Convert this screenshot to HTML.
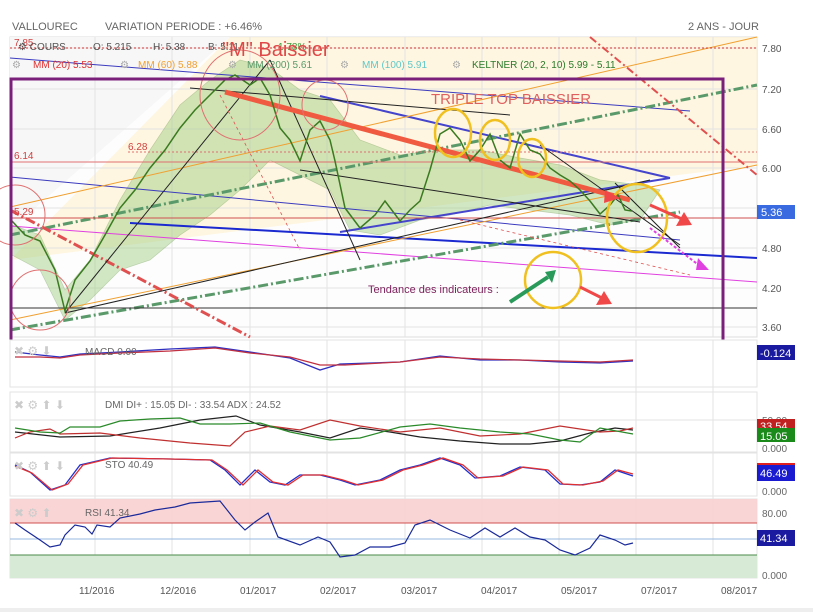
<!DOCTYPE html>
<html><head><meta charset="utf-8"><style>
html,body{margin:0;padding:0;background:#fff;width:813px;height:612px;overflow:hidden}
svg{display:block;font-family:"Liberation Sans",sans-serif}
</style></head><body>
<svg width="813" height="612" viewBox="0 0 813 612">
<rect x="0" y="608" width="813" height="4" fill="#eee"/>
<text x="12" y="30" font-size="11" fill="#666">VALLOUREC</text>
<text x="105" y="30" font-size="11" fill="#666">VARIATION PERIODE : +6.46%</text>
<text x="688" y="30" font-size="11" fill="#666">2 ANS - JOUR</text>

<rect x="10" y="37" width="747" height="300" fill="#fdfdfd" stroke="#ddd"/>
<polygon points="230,37 757,37 757,165 10,260" fill="#fdf3d6" opacity="0.75"/>
<polygon points="10,37 230,37 10,230" fill="#f7f7f7"/>
<g stroke="#e3e3e3" stroke-width="1">
<line x1="95" y1="37" x2="95" y2="337"/><line x1="172" y1="37" x2="172" y2="337"/><line x1="250" y1="37" x2="250" y2="337"/><line x1="327" y1="37" x2="327" y2="337"/><line x1="405" y1="37" x2="405" y2="337"/><line x1="482" y1="37" x2="482" y2="337"/><line x1="559" y1="37" x2="559" y2="337"/><line x1="636" y1="37" x2="636" y2="337"/><line x1="713" y1="37" x2="713" y2="337"/>
<line x1="10" y1="48" x2="757" y2="48"/><line x1="10" y1="89" x2="757" y2="89"/><line x1="10" y1="129" x2="757" y2="129"/><line x1="10" y1="168" x2="757" y2="168"/><line x1="10" y1="208" x2="757" y2="208"/><line x1="10" y1="248" x2="757" y2="248"/><line x1="10" y1="288" x2="757" y2="288"/><line x1="10" y1="327" x2="757" y2="327"/>
</g>
<path d="M12,225 L40,235 L65,290 L90,260 L120,200 L150,150 L180,105 L210,80 L240,60 L270,68 L300,90 L330,100 L360,140 L400,155 L440,150 L480,150 L520,158 L560,165 L600,180 L640,185 L660,190 L640,220 L610,225 L570,215 L530,210 L490,205 L450,215 L420,220 L380,235 L350,230 L330,190 L300,175 L270,160 L240,190 L210,215 L180,235 L150,260 L120,270 L90,300 L65,320 L40,270 L12,255 Z" fill="#9ccc7e" opacity="0.45" stroke="#6a9a4a" stroke-width="0.7"/>
<g fill="none">
<line x1="10" y1="58" x2="690" y2="111" stroke="#3b3bbf" stroke-width="1"/>
<line x1="10" y1="177" x2="680" y2="240" stroke="#3b3bbf" stroke-width="1"/>
<line x1="130" y1="223" x2="757" y2="258" stroke="#1a2ad0" stroke-width="2"/>
<line x1="10" y1="226" x2="757" y2="282" stroke="#e040e0" stroke-width="1"/>
<line x1="320" y1="96" x2="670" y2="178" stroke="#4444cc" stroke-width="2"/>
<line x1="340" y1="232" x2="670" y2="178" stroke="#4444cc" stroke-width="2"/>
<line x1="10" y1="235" x2="757" y2="85" stroke="#5a9a6a" stroke-width="3" stroke-dasharray="10,3,2,3"/>
<line x1="10" y1="330" x2="680" y2="212" stroke="#5a9a6a" stroke-width="3" stroke-dasharray="10,3,2,3"/>
<line x1="10" y1="207" x2="757" y2="37" stroke="#f0a030" stroke-width="1"/>
<line x1="10" y1="320" x2="757" y2="165" stroke="#f0a030" stroke-width="1"/>
<line x1="10" y1="162" x2="757" y2="162" stroke="#e07070" stroke-width="1"/>
<line x1="128" y1="152" x2="757" y2="152" stroke="#e07070" stroke-width="1" stroke-dasharray="2,2"/>
<line x1="10" y1="218" x2="757" y2="218" stroke="#d05050" stroke-width="1"/>
<line x1="10" y1="308" x2="757" y2="308" stroke="#333" stroke-width="1"/>
<line x1="10" y1="48" x2="757" y2="48" stroke="#d03030" stroke-width="1" stroke-dasharray="2,2"/>
<line x1="10" y1="210" x2="250" y2="337" stroke="#e05050" stroke-width="3" stroke-dasharray="10,3,2,3"/>
<line x1="590" y1="37" x2="757" y2="175" stroke="#e05050" stroke-width="2" stroke-dasharray="8,3,2,3"/>
<line x1="65" y1="313" x2="270" y2="60" stroke="#222" stroke-width="1"/>
<line x1="65" y1="313" x2="650" y2="180" stroke="#222" stroke-width="1"/>
<line x1="190" y1="88" x2="510" y2="115" stroke="#222" stroke-width="1"/>
<line x1="270" y1="60" x2="360" y2="260" stroke="#222" stroke-width="1"/>
<line x1="300" y1="170" x2="640" y2="222" stroke="#222" stroke-width="1"/>
<line x1="540" y1="145" x2="680" y2="245" stroke="#222" stroke-width="1"/>
<line x1="615" y1="183" x2="680" y2="248" stroke="#222" stroke-width="1"/>
<line x1="225" y1="92" x2="630" y2="200" stroke="#f05a40" stroke-width="5"/>
<line x1="220" y1="95" x2="300" y2="250" stroke="#e05050" stroke-width="0.8" stroke-dasharray="3,3"/>
<line x1="460" y1="220" x2="690" y2="275" stroke="#e05050" stroke-width="0.8" stroke-dasharray="3,3"/>
</g>
<polyline fill="none" stroke="#3a7a20" stroke-width="1.5" points="12,221 25,235 40,241 55,270 65,311 75,280 90,261 105,235 120,208 135,190 150,168 165,150 180,128 195,110 210,95 225,80 235,75 250,85 260,78 270,95 280,128 290,140 300,161 310,130 320,121 330,140 335,161 345,208 360,228 375,215 385,201 400,221 410,210 420,201 430,170 440,134 450,128 460,140 470,161 480,150 490,134 500,160 510,168 520,134 530,150 540,154 550,168 560,175 570,181 580,190 590,201 600,214 610,205 618,195 625,210 632,211"/>
<g fill="none" stroke="#e07070" stroke-width="1">
<ellipse cx="240" cy="95" rx="40" ry="45"/><ellipse cx="325" cy="105" rx="23" ry="25"/><circle cx="40" cy="300" r="30"/><circle cx="15" cy="215" r="30"/>
</g>
<g fill="none" stroke="#f0c020" stroke-width="2.5">
<ellipse cx="453" cy="133" rx="18" ry="24"/><ellipse cx="495" cy="140" rx="15" ry="20"/><ellipse cx="532" cy="158" rx="14" ry="19"/><ellipse cx="637" cy="218" rx="30" ry="34"/><circle cx="553" cy="280" r="28"/>
</g>
<rect x="11" y="79" width="712" height="262" fill="none" stroke="#7a1f7a" stroke-width="3"/>
<g>
<line x1="650" y1="205" x2="682" y2="219" stroke="#f04848" stroke-width="3"/><polygon points="692,225 676,226 684,212" fill="#f04848"/>
<line x1="580" y1="287" x2="602" y2="298" stroke="#f04848" stroke-width="3"/><polygon points="612,304 596,305 604,291" fill="#f04848"/>
<line x1="510" y1="302" x2="548" y2="277" stroke="#2a9a5a" stroke-width="4"/><polygon points="556,270 545,272 552,283" fill="#2a9a5a"/>
<line x1="650" y1="228" x2="700" y2="266" stroke="#e040e0" stroke-width="2" stroke-dasharray="3,2"/><polygon points="709,270 698,258 696,270" fill="#e040e0"/>
<polygon points="605,190 620,198 604,203" fill="#f04848"/>
</g>
<text x="14" y="46" font-size="10" fill="#d04040">7.85</text>
<text x="18" y="50" font-size="10" fill="#555">⚙ COURS</text>
<text x="93" y="50" font-size="10" fill="#555">O: 5.215</text>
<text x="153" y="50" font-size="10" fill="#555">H: 5.38</text>
<text x="208" y="50" font-size="10" fill="#555">B: 5.11</text>
<text x="278" y="50" font-size="10" fill="#3a9a3a">1.78%</text>
<text x="222" y="56" font-size="20" fill="#e04848">"M" Baissier</text>
<g font-size="10">
<text x="12" y="68" fill="#aaa">⚙</text><text x="33" y="68" fill="#e03030">MM (20) 5.53</text>
<text x="120" y="68" fill="#aaa">⚙</text><text x="138" y="68" fill="#f0a030">MM (60) 5.88</text>
<text x="228" y="68" fill="#aaa">⚙</text><text x="247" y="68" fill="#5a9a6a">MM (200) 5.61</text>
<text x="340" y="68" fill="#aaa">⚙</text><text x="362" y="68" fill="#5cc8c8">MM (100) 5.91</text>
<text x="452" y="68" fill="#aaa">⚙</text><text x="472" y="68" fill="#2a7a2a">KELTNER (20, 2, 10) 5.99 - 5.11</text>
</g>
<text x="431" y="104" font-size="15" fill="#e06060">TRIPLE TOP BAISSIER</text>
<text x="14" y="159" font-size="10" fill="#d04040">6.14</text>
<text x="128" y="150" font-size="10" fill="#d04040">6.28</text>
<text x="14" y="215" font-size="10" fill="#d04040">5.29</text>
<text x="368" y="293" font-size="11" fill="#7a1f5a">Tendance des indicateurs :</text>
<g font-size="10" fill="#555">
<text x="762" y="52">7.80</text><text x="762" y="93">7.20</text><text x="762" y="133">6.60</text><text x="762" y="172">6.00</text><text x="762" y="212">5.40</text><text x="762" y="252">4.80</text><text x="762" y="292">4.20</text><text x="762" y="331">3.60</text>
</g>
<rect x="757" y="205" width="38" height="14" fill="#3a6ae0"/><text x="761" y="216" font-size="11" fill="#fff">5.36</text>

<g fill="#fff" stroke="#e3e3e3">
<rect x="10" y="340" width="747" height="47"/><rect x="10" y="392" width="747" height="60"/><rect x="10" y="453" width="747" height="43"/><rect x="10" y="499" width="747" height="79"/>
</g>
<g stroke="#e3e3e3">
<line x1="95" y1="340" x2="95" y2="578"/><line x1="172" y1="340" x2="172" y2="578"/><line x1="250" y1="340" x2="250" y2="578"/><line x1="327" y1="340" x2="327" y2="578"/><line x1="405" y1="340" x2="405" y2="578"/><line x1="482" y1="340" x2="482" y2="578"/><line x1="559" y1="340" x2="559" y2="578"/><line x1="636" y1="340" x2="636" y2="578"/><line x1="713" y1="340" x2="713" y2="578"/>
<line x1="10" y1="420" x2="757" y2="420"/>
</g>
<rect x="10" y="499" width="747" height="24" fill="#f9d0d0" opacity="0.9"/>
<rect x="10" y="555" width="747" height="23" fill="#d6ead6"/>
<line x1="10" y1="523" x2="757" y2="523" stroke="#d05050"/>
<line x1="10" y1="555" x2="757" y2="555" stroke="#4a8a4a"/>
<line x1="10" y1="539" x2="757" y2="539" stroke="#9ab8e0"/>
<polyline fill="none" stroke="#3030c0" stroke-width="1.3" points="15,352 40,355 60,357 80,354 120,352 170,349 215,347 250,352 290,358 320,370 340,364 400,362 440,356 480,360 520,360 560,362 600,363 633,361"/>
<polyline fill="none" stroke="#c03040" stroke-width="1.3" points="15,357 40,357 60,358 80,355 120,353 170,351 215,348 250,353 290,357 320,365 345,365 400,362 440,357 480,359 520,360 560,361 600,362 633,360"/>
<polyline fill="none" stroke="#222" stroke-width="1.2" points="15,432 60,437 110,436 160,428 200,420 236,416 260,425 300,432 330,438 360,428 390,432 420,437 460,441 500,444 530,444 560,441 590,433 615,428 633,430"/>
<polyline fill="none" stroke="#c03030" stroke-width="1.2" points="15,438 30,432 50,429 60,434 100,433 140,438 190,443 230,446 245,432 270,426 300,430 330,420 360,426 400,432 440,428 480,436 520,434 560,426 600,432 620,431 633,428"/>
<polyline fill="none" stroke="#2a8a2a" stroke-width="1.2" points="15,428 40,432 60,433 70,427 100,427 120,421 150,419 180,418 200,424 230,424 260,423 290,432 330,440 360,438 400,427 430,424 460,428 500,432 530,434 560,440 580,442 600,428 633,434"/>
<polyline fill="none" stroke="#2030d0" stroke-width="1.3" points="15,465 30,472 50,490 65,485 80,465 110,458 170,459 210,460 225,470 240,485 255,470 270,482 285,485 300,475 320,475 340,480 355,485 380,480 400,470 420,465 440,458 460,465 475,478 500,476 520,467 545,470 560,484 580,485 600,482 615,470 633,476"/>
<polyline fill="none" stroke="#e03030" stroke-width="1.3" points="15,466 32,473 52,490 68,484 83,465 112,458 170,459 212,460 227,470 243,485 258,470 273,482 288,485 303,475 323,475 343,480 358,485 383,480 403,470 423,465 443,458 463,465 478,478 503,476 523,467 548,470 563,484 583,485 603,481 618,470 633,474"/>
<polyline fill="none" stroke="#1a2a9a" stroke-width="1.2" points="15,523 25,530 40,540 50,547 60,545 65,535 75,525 85,527 92,534 97,525 110,527 120,518 140,514 155,510 175,507 190,503 220,501 235,520 245,530 255,522 268,513 278,537 300,545 318,537 330,542 340,557 355,555 370,547 390,547 405,543 415,525 430,520 450,530 470,538 485,528 500,537 515,528 530,537 545,540 560,550 575,555 590,548 600,535 615,540 625,545 633,543"/>
<g font-size="12" fill="#ccc">
<text x="14" y="355">✖ ⚙ ⬇</text>
<text x="14" y="409">✖ ⚙ ⬆ ⬇</text>
<text x="14" y="470">✖ ⚙ ⬆ ⬇</text>
<text x="14" y="517">✖ ⚙ ⬆</text>
</g>
<g font-size="10" fill="#666">
<text x="85" y="355">MACD 0.00</text>
<text x="105" y="408">DMI DI+ : 15.05 DI- : 33.54 ADX : 24.52</text>
<text x="105" y="468">STO 40.49</text>
<text x="85" y="516">RSI 41.34</text>
<text x="762" y="424">50.00</text><text x="762" y="452">0.000</text><text x="762" y="495">0.000</text><text x="762" y="517">80.00</text><text x="762" y="579">0.000</text>
</g>
<rect x="757" y="345" width="38" height="15" fill="#1a1aa0"/><text x="760" y="357" font-size="11" fill="#fff">-0.124</text>
<rect x="757" y="419" width="38" height="14" fill="#c02020"/><text x="760" y="430" font-size="11" fill="#fff">33.54</text>
<rect x="757" y="428" width="38" height="14" fill="#1a8a1a"/><text x="760" y="440" font-size="11" fill="#fff">15.05</text>
<rect x="757" y="463" width="38" height="18" fill="#1a1ad0"/><rect x="757" y="463" width="38" height="2" fill="#e02020"/><text x="760" y="477" font-size="11" fill="#fff">46.49</text>
<rect x="757" y="530" width="38" height="16" fill="#1a1aa0"/><text x="760" y="542" font-size="11" fill="#fff">41.34</text>
<g font-size="10" fill="#555">
<text x="79" y="594">11/2016</text><text x="160" y="594">12/2016</text><text x="240" y="594">01/2017</text><text x="320" y="594">02/2017</text><text x="401" y="594">03/2017</text><text x="481" y="594">04/2017</text><text x="561" y="594">05/2017</text><text x="641" y="594">07/2017</text><text x="721" y="594">08/2017</text>
</g>
</svg>
</body></html>
